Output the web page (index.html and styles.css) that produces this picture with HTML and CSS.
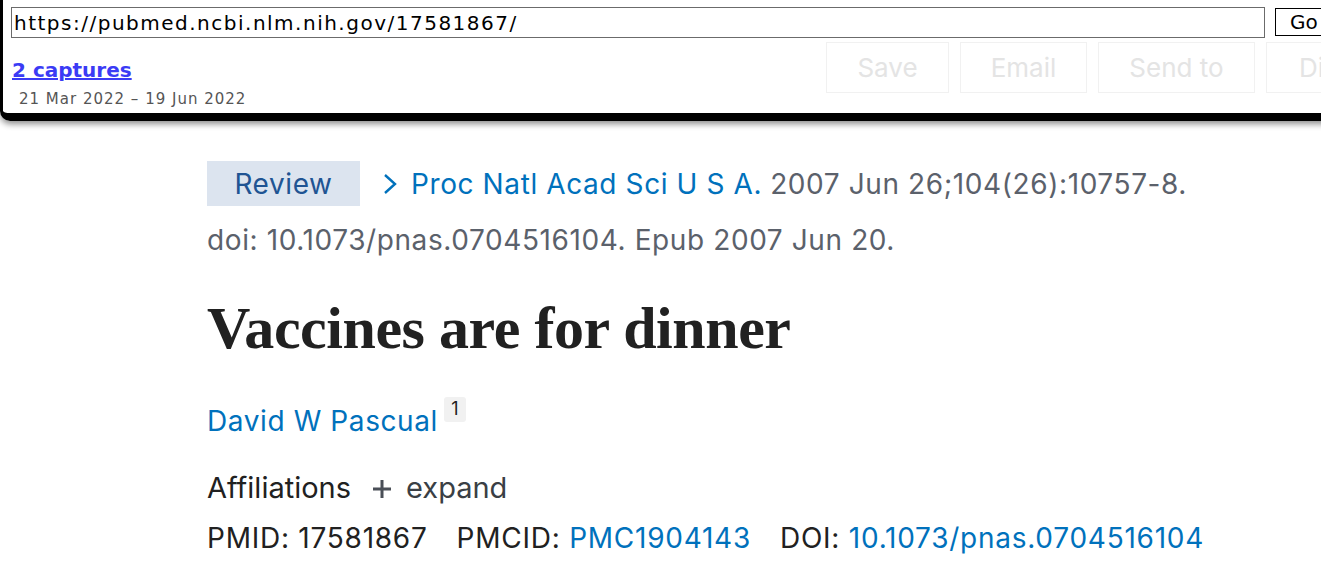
FILE: index.html
```html
<!DOCTYPE html>
<html lang="en">
<head>
<meta charset="utf-8">
<title>Vaccines are for dinner - PubMed</title>
<link rel="stylesheet" href="styles.css">
</head>
<body>
<div class="page">
  <div class="actions">
    <button class="action action-save">Save</button>
    <button class="action action-email">Email</button>
    <button class="action action-send">Send to</button>
    <button class="action action-display">Display options</button>
  </div>
  <main class="article">
    <div class="cite">
      <div class="cite-line">
        <span class="badge">Review</span>
        <svg class="chev" width="14" height="22" viewBox="0 0 14 22"><polyline points="2,2 12,11 2,20" fill="none" stroke="#0071bc" stroke-width="2.4"/></svg>
        <a class="journal" href="#">Proc Natl Acad Sci U S A.</a>
        <span class="date">2007 Jun 26;104(26):10757-8.</span>
      </div>
      <div class="cite-line2">doi: 10.1073/pnas.0704516104. Epub 2007 Jun 20.</div>
    </div>
    <h1 class="title">Vaccines are for dinner</h1>
    <div class="authors"><a class="author" href="#">David W Pascual</a><sup class="aff-num">1</sup></div>
    <div class="affil"><span class="affil-label">Affiliations</span><span class="expand"><svg class="plus" width="22" height="22" viewBox="0 0 22 22"><path d="M11 2v18M2 11h18" stroke="#4a4f57" stroke-width="3" fill="none"/></svg>expand</span></div>
    <div class="ids">
      <span class="id">PMID: <span class="id-val">17581867</span></span>
      <span class="id">PMCID: <a class="id-link" href="#">PMC1904143</a></span>
      <span class="id">DOI: <a class="id-link" href="#">10.1073/pnas.0704516104</a></span>
    </div>
  </main>
</div>
<div class="wb-toolbar">
  <div class="wb-row">
    <input class="wb-url" type="text" value="https://pubmed.ncbi.nlm.nih.gov/17581867/">
    <button class="wb-go">Go</button>
  </div>
  <a class="wb-captures" href="#">2 captures</a>
  <div class="wb-dates">21 Mar 2022 – 19 Jun 2022</div>
</div>
</body>
</html>
```
FILE: styles.css
```css
html, body {
  margin: 0;
  padding: 0;
  background: #fff;
  overflow: hidden;
}
body {
  width: 1321px;
  height: 575px;
  position: relative;
  font-family: "Inter", "Liberation Sans", sans-serif;
}
.page {
  display: flex;
  flex-direction: column;
}
.actions {
  display: flex;
  gap: 11px;
  padding: 42px 0 0 826px;
  white-space: nowrap;
  overflow: hidden;
}
.action {
  flex: none;
  height: 51px;
  background: #fff;
  border: 1px solid #f1f1f1;
  color: #e4e4e4;
  font-family: "Inter", "Liberation Sans", sans-serif;
  font-size: 26px;
  padding: 0;
}
.action-save { width: 123px; }
.action-email { width: 127px; }
.action-send { width: 157px; }
.action-display { width: 240px; text-align: left; padding-left: 32px; }

.article {
  padding: 68px 0 0 207px;
  color: #212121;
}
.cite {
  font-size: 28px;
  letter-spacing: 0.6px;
  color: #5b616b;
}
.cite-line {
  display: flex;
  align-items: center;
  height: 45px;
  white-space: nowrap;
}
.badge {
  display: flex;
  align-items: center;
  justify-content: center;
  width: 153px;
  height: 45px;
  background: #dce4ef;
  color: #205493;
}
.chev {
  margin: 0 14px 0 23px;
  flex: none;
}
.journal {
  color: #0071bc;
  text-decoration: none;
  margin-right: 8px;
}
.cite-line2 {
  margin-top: 14px;
  line-height: 40px;
}
.title {
  margin: 34px 0 0;
  font-family: "Liberation Serif", serif;
  font-weight: bold;
  font-size: 60px;
  letter-spacing: -0.45px;
  line-height: 68px;
  color: #212121;
}
.authors {
  margin-top: 39px;
  font-size: 28px;
  letter-spacing: 0.6px;
  line-height: 40px;
  display: flex;
  align-items: flex-start;
}
.author {
  color: #0071bc;
  text-decoration: none;
}
.aff-num {
  display: inline-block;
  margin-left: 6px;
  margin-top: -4px;
  background: #f1f1f1;
  border-radius: 3px;
  width: 22px;
  height: 25px;
  font-size: 18px;
  letter-spacing: 0;
  line-height: 24px;
  text-align: center;
  vertical-align: top;
  color: #212121;
}
.affil {
  margin-top: 27px;
  font-size: 29px;
  line-height: 40px;
  display: flex;
  align-items: center;
}
.affil-label { color: #212121; }
.expand {
  display: flex;
  align-items: center;
  color: #3a3f45;
  margin-left: 20px;
}
.plus {
  margin-right: 13px;
  margin-top: 2px;
}
.ids {
  margin-top: 10px;
  font-size: 28px;
  letter-spacing: 0.75px;
  line-height: 40px;
  display: flex;
  gap: 29px;
  white-space: nowrap;
}
.id-link {
  color: #0071bc;
  text-decoration: none;
}

.wb-toolbar {
  position: absolute;
  top: 0;
  left: 0;
  width: 1340px;
  height: 113px;
  box-sizing: content-box;
  border-left: 3px solid #000;
  border-bottom: 8px solid #000;
  border-bottom-left-radius: 10px;
  box-shadow: 0 3px 6px rgba(0,0,0,0.45);
  background: transparent;
  font-family: "DejaVu Sans", sans-serif;
}
.wb-row {
  display: flex;
  align-items: flex-start;
  padding: 7px 0 0 8px;
  gap: 10px;
}
.wb-url {
  width: 1254px;
  height: 31px;
  box-sizing: border-box;
  border: 1px solid #6b6b6b;
  padding: 0 2px;
  font-family: "DejaVu Sans", sans-serif;
  font-size: 20px;
  letter-spacing: 1.5px;
  color: #000;
  background: #fff;
  outline: none;
}
.wb-go {
  margin-top: 1px;
  height: 28px;
  padding: 0 14px;
  border: 1px solid #000;
  background: #fff;
  font-family: "DejaVu Sans", sans-serif;
  font-size: 20px;
  color: #000;
}
.wb-captures {
  display: inline-block;
  margin: 20px 0 0 9px;
  font-weight: bold;
  font-size: 20px;
  color: #3b3bf5;
  text-decoration: underline;
}
.wb-dates {
  margin: 8px 0 0 16px;
  font-size: 15px;
  letter-spacing: 1px;
  color: #555;
}
```
